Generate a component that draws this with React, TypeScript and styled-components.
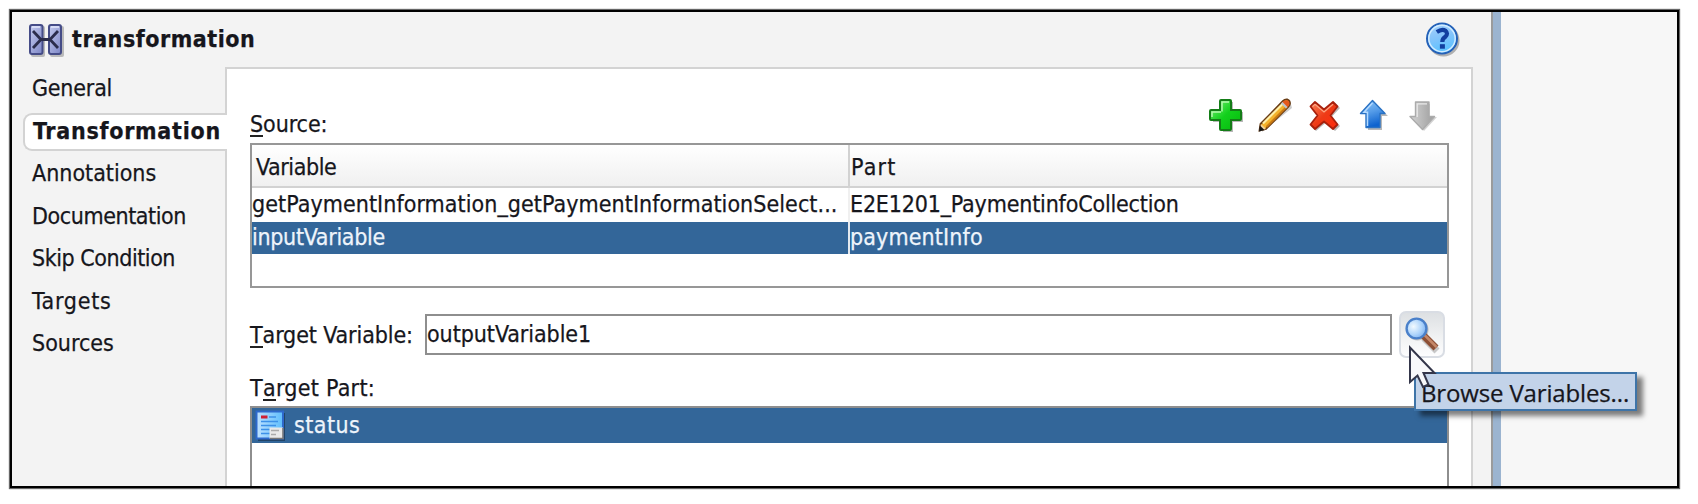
import React from 'react';
import styled, { createGlobalStyle } from 'styled-components';

const GlobalStyle = createGlobalStyle`
  * { box-sizing: border-box; }
  body { margin: 0; background: #fff; }
`;

const Page = styled.main`
  width: 1698px;
  height: 504px;
  padding: 10px 0 0 10px;
  overflow: hidden;
  color: #16161c;
  font-family: 'DejaVu Sans Condensed', 'DejaVu Sans', sans-serif;
  font-stretch: condensed;
  font-size: 23px;
  -webkit-text-stroke: 0.25px currentColor;
`;

const Frame = styled.div`
  display: flex;
  width: 1669px;
  height: 478px;
  border: 2px solid #000;
  box-shadow: 0 0 1px 0.7px rgba(0, 0, 0, 0.6);
`;

const Dialog = styled.section`
  display: flex;
  flex-direction: column;
  width: 1481px;
  height: 474px;
  background: #f3f3f3;
  border-right: 2px solid #9a9b9c;
`;

const Splitter = styled.div`
  width: 8px;
  background: #9bb4d0;
`;

const Canvas = styled.div`
  flex: 1;
  background: #f7f7f7;
`;

const Header = styled.header`
  display: flex;
  align-items: flex-start;
  height: 55px;
  padding: 10px 30px 0 16px;
`;

const Title = styled.h1`
  flex: 1;
  margin: 1px 0 0 8px;
  font-size: 23px;
  line-height: 32px;
  letter-spacing: 0.52px;
`;

const Body = styled.div`
  display: flex;
  height: 419px;
`;

const Tabs = styled.nav`
  position: relative;
  z-index: 1;
  width: 215px;
  margin-right: -2px;
  padding: 3px 0 0 11px;
`;

const Tab = styled.div<{ $active?: boolean; $spacing: number }>`
  height: 38px;
  margin-bottom: 4.5px;
  padding-left: ${(p) => (p.$active ? 8 : 7)}px;
  border: 2px solid ${(p) => (p.$active ? '#d3d3d3' : 'transparent')};
  border-right: 0;
  border-radius: 9px 0 0 9px;
  background: ${(p) => (p.$active ? '#fff' : 'transparent')};
  font-weight: ${(p) => (p.$active ? 700 : 400)};
  line-height: 33px;
  letter-spacing: ${(p) => p.$spacing}px;
  white-space: nowrap;
`;

const Content = styled.div`
  width: 1248px;
  height: 419px;
  padding: 30px 22px 0 23px;
  border: 2px solid #d3d3d3;
  border-bottom: 0;
  background: #fff;
`;

const SourceBar = styled.div`
  display: flex;
  align-items: flex-start;
  justify-content: space-between;
  height: 44px;
`;

const Label = styled.label<{ $spacing?: number }>`
  line-height: 30px;
  letter-spacing: ${(p) => p.$spacing ?? 0}px;
  white-space: nowrap;
`;

const Mnemonic = styled.span`
  box-shadow: inset 0 -2px 0 #222;
  display: inline-block;
  height: 28px;
  vertical-align: top;
`;

const SourceLabel = styled(Label)`
  padding-top: 10px;
`;

const Toolbar = styled.div`
  display: flex;
  gap: 13px;
  margin: -1px 8px 0 0;
`;

const Table = styled.div`
  width: 1199px;
  height: 145px;
  border: 2px solid #979797;
  background: #fff;
`;

const TableRow = styled.div<{ $selected?: boolean }>`
  display: grid;
  grid-template-columns: 598px 1fr;
  height: ${(p) => (p.$selected ? 32 : 34)}px;
  background: ${(p) => (p.$selected ? '#336699' : '#fff')};
  color: ${(p) => (p.$selected ? '#eef4fb' : '#16161c')};
  line-height: ${(p) => (p.$selected ? 30 : 32)}px;
`;

const TableHead = styled(TableRow)`
  height: 43px;
  border-bottom: 2px solid #d2d2d2;
  background: linear-gradient(#fff, #f0f0f0);
  line-height: 45px;
`;

const Cell = styled.div<{ $spacing: number; $divider?: string; $inset?: number }>`
  padding-left: ${(p) => p.$inset ?? 0}px;
  border-right: ${(p) => (p.$divider ? `2px solid ${p.$divider}` : '0')};
  letter-spacing: ${(p) => p.$spacing}px;
  white-space: nowrap;
  overflow: hidden;
`;

const TargetRow = styled.div`
  display: flex;
  align-items: center;
  height: 48px;
  margin-top: 22px;
`;

const TargetLabel = styled(Label)`
  width: 175px;
  padding-top: 1px;
`;

const Field = styled.input`
  width: 967px;
  height: 41px;
  padding: 0;
  border: 2px solid #8e8e8e;
  outline: 0;
  background: #fff;
  color: inherit;
  font: inherit;
  letter-spacing: -0.06px;
`;

const BrowseButton = styled.button`
  position: relative;
  width: 46px;
  height: 47px;
  margin-left: 7px;
  padding: 0;
  border: 2px solid #d9dde4;
  border-radius: 7px;
  background: linear-gradient(#dde0e3, #f2f3f4 60%, #fdfdfe);
  color: inherit;
`;

const GlassIcon = styled.svg`
  position: absolute;
  left: 3px;
  top: 3px;
`;

const Tooltip = styled.span`
  position: absolute;
  z-index: 2;
  left: 13px;
  top: 59px;
  width: 223px;
  height: 39px;
  padding-left: 5px;
  border: 2px solid #3e74a8;
  background: #c3d3e9;
  box-shadow: 6px 5px 5px rgba(0, 0, 0, 0.5);
  font: 24px/37px 'Open Sans', 'Noto Sans', sans-serif;
  letter-spacing: -0.15px;
  text-align: left;
  white-space: nowrap;
`;

const Pointer = styled.svg`
  position: absolute;
  z-index: 3;
  left: 7px;
  top: 32px;
`;

const PartLabel = styled(Label)`
  display: block;
  height: 33px;
  margin-top: 15px;
`;

const PartList = styled.div`
  width: 1199px;
  height: 80px;
  border: 2px solid #8e8e8e;
  border-bottom: 0;
`;

const PartItem = styled.div`
  display: flex;
  align-items: center;
  height: 35px;
  padding-left: 3px;
  background: #336699;
  color: #eef4fb;
  line-height: 33px;
  letter-spacing: 0.44px;
`;

const PartName = styled.span`
  margin: 0 0 0 9px;
`;

const TransformIcon = () => (
  <svg width="36" height="36" viewBox="0 0 36 36">
    <defs>
      <linearGradient id="tf" x1="0" x2="1" y1="0" y2="1">
        <stop offset="0" stopColor="#c3caee" />
        <stop offset="1" stopColor="#7d86c6" />
      </linearGradient>
    </defs>
    <g fill="#777" opacity="0.45">
      <rect x="3" y="4" width="14" height="31" rx="2" />
      <rect x="22" y="4" width="14" height="31" rx="2" />
    </g>
    <g fill="url(#tf)" stroke="#454c87" strokeWidth="2">
      <rect x="2" y="3" width="12.5" height="29" rx="2" />
      <rect x="21" y="3" width="12" height="29" rx="2" />
    </g>
    <path d="M4 5h8M23 5h8" stroke="#e3e7fb" strokeWidth="1.5" />
    <path d="M5 9L13 17.500L5 26M30 9L22 17.500L30 26M12 17.500H23" fill="none" stroke="#2b2d4c" strokeWidth="2.800" />
  </svg>
);

const HelpIcon = () => (
  <svg width="36" height="36" viewBox="0 0 36 36">
    <defs>
      <linearGradient id="hp" x1="0" x2="0.3" y1="0" y2="1">
        <stop offset="0" stopColor="#a9d3fb" />
        <stop offset="0.5" stopColor="#86c4fb" />
        <stop offset="1" stopColor="#5cc2ff" />
      </linearGradient>
    </defs>
    <circle cx="18.500" cy="18.500" r="16" fill="#333" opacity="0.35" />
    <circle cx="17" cy="16.500" r="15" fill="url(#hp)" stroke="#2461b8" strokeWidth="2" />
    <circle cx="17" cy="16.500" r="13.200" fill="none" stroke="#d2ecff" strokeWidth="1.500" />
    <path d="M11.800 10Q17 6.500 20.500 8.700Q23.500 11.500 20.500 14.600Q17.300 16.500 17.300 20" fill="none" stroke="#123fa0" strokeWidth="4.200" />
    <rect x="14.900" y="22.200" width="5" height="4.500" fill="#123fa0" />
  </svg>
);

const AddIcon = () => (
  <svg width="36" height="36" viewBox="0 0 36 36">
    <defs>
      <linearGradient id="ad" x1="0" x2="1" y1="0" y2="1">
        <stop offset="0" stopColor="#7cf27a" />
        <stop offset="0.5" stopColor="#12d01c" />
        <stop offset="1" stopColor="#05b90c" />
      </linearGradient>
    </defs>
    <path d="M14 4h10v10h10v10H24v10H14V24H4V14h10z" fill="#333" opacity="0.35" />
    <path d="M12 2h9q1 0 1 1v9H31q1 0 1 1v8q0 1-1 1h-9V31q0 1-1 1h-9q-1 0-1-1v-9H2q-1 0-1-1v-8q0-1 1-1h9V3q0-1 1-1z" fill="url(#ad)" stroke="#147d17" strokeWidth="2" />
    <path d="M13 13.500V4h7M3 19v-5h9" fill="none" stroke="#b5f8ae" strokeWidth="1.500" />
  </svg>
);

const EditIcon = () => (
  <svg width="36" height="36" viewBox="0 0 36 36">
    <path d="M4 34L34 10L32 3L5 30z" fill="#333" opacity="0.25" />
    <path d="M2.500 26L25 3q2-2 4.500-1.500Q32 2.500 32 5.500Q32 7 30.500 8.500L8 31L1.500 32.500z" fill="#f4b32c" stroke="#6a3c14" strokeWidth="1.800" />
    <path d="M5 25.500L25.500 5" stroke="#fff0a8" strokeWidth="2.200" />
    <path d="M8.500 29L29 8.500" stroke="#c87912" strokeWidth="2" />
    <path d="M24 4.500L29 9.500L31 7.500Q32.500 4.500 30 2.500Q27 1.500 25 3.500z" fill="#e5581b" />
    <path d="M23 5.500L28 10.500L29.500 9L24.500 4z" fill="#bfc4cc" />
    <path d="M3 26L8 31L1.500 33z" fill="#f3d39a" />
    <path d="M1.800 27.500L6.500 32L1 33.500z" fill="#141414" />
  </svg>
);

const DeleteIcon = () => (
  <svg width="36" height="36" viewBox="0 0 36 36">
    <defs>
      <linearGradient id="dl" x1="0" x2="1" y1="0" y2="1">
        <stop offset="0" stopColor="#f98258" />
        <stop offset="0.5" stopColor="#ee3a16" />
        <stop offset="1" stopColor="#ff2a0c" />
      </linearGradient>
    </defs>
    <path d="M9 5l9.500 8L28 5l5 5l-8.500 9L33 28l-5 5l-9.500-8L9 33l-5-5l8.500-9L4 10z" fill="#333" opacity="0.35" />
    <path d="M8 4L17 11.500L26 4L30.500 8.500L23.500 17.500L30.500 26.500L26 31L17 23.500L8 31L3.500 26.500L10.500 17.500L3.500 8.500z" fill="url(#dl)" stroke="#a8210d" strokeWidth="1.800" strokeLinejoin="round" />
    <path d="M5.500 8.500L8 6.200L17 14L26 6.200" fill="none" stroke="#fda583" strokeWidth="1.200" />
  </svg>
);

const UpIcon = () => (
  <svg width="36" height="36" viewBox="0 0 36 36">
    <defs>
      <linearGradient id="up" x1="0" x2="0.300" y1="0" y2="1">
        <stop offset="0" stopColor="#8ec6f8" />
        <stop offset="0.5" stopColor="#559ce8" />
        <stop offset="1" stopColor="#0e63cf" />
      </linearGradient>
    </defs>
    <path d="M18 4L32 18H26V32H12V18z" fill="#333" opacity="0.35" />
    <path d="M16.500 2.500L29 15.500H24V29.500H10V15.500H4.500z" fill="url(#up)" stroke="#2a72c4" strokeWidth="1.400" strokeLinejoin="round" />
    <path d="M11.500 28V14.300H8L16.500 5" fill="none" stroke="#b4daff" strokeWidth="1.500" />
  </svg>
);

const DownIcon = () => (
  <svg width="36" height="36" viewBox="0 0 36 36">
    <defs>
      <linearGradient id="dn" x1="0" x2="1">
        <stop offset="0" stopColor="#d3d3d3" />
        <stop offset="1" stopColor="#9d9d9d" />
      </linearGradient>
    </defs>
    <path d="M13 6H25V19H32L19 33L8 19H13z" fill="#333" opacity="0.22" />
    <path d="M10.500 4H24V18.500H29.500L17.500 31.500L5 18.500H10.500z" fill="url(#dn)" stroke="#ababab" strokeWidth="1.400" strokeLinejoin="round" />
    <path d="M12.200 19V5.800H22" fill="none" stroke="#e9e9e9" strokeWidth="1.300" />
  </svg>
);

const Magnifier = () => (
  <GlassIcon width="38" height="38" viewBox="0 0 38 38">
    <defs>
      <radialGradient id="gl" cx="0.350" cy="0.400" r="0.700">
        <stop offset="0" stopColor="#f2faff" />
        <stop offset="0.6" stopColor="#aed4fb" />
        <stop offset="1" stopColor="#79aef0" />
      </radialGradient>
    </defs>
    <path d="M20 22L33 35" stroke="#555" strokeWidth="7" opacity="0.3" />
    <circle cx="13.500" cy="13.500" r="11" fill="#555" opacity="0.3" />
    <path d="M19.500 19.500L32 32" stroke="#8d4f35" strokeWidth="7" />
    <path d="M20.500 19L32.500 31" stroke="#c58768" strokeWidth="2.500" />
    <circle cx="12.500" cy="12.500" r="9.900" fill="url(#gl)" stroke="#4a80ca" strokeWidth="2.400" />
  </GlassIcon>
);

const VariableIcon = () => (
  <svg width="30" height="31" viewBox="0 0 30 31">
    <defs>
      <linearGradient id="vr" x1="0" x2="1">
        <stop offset="0" stopColor="#bfe2ff" />
        <stop offset="1" stopColor="#5dbdfc" />
      </linearGradient>
    </defs>
    <rect x="3" y="3" width="27" height="28" fill="#123" opacity="0.5" />
    <rect x="1.500" y="1.500" width="26.500" height="27" fill="url(#vr)" stroke="#2d69cc" strokeWidth="2" />
    <path d="M6 11.500h17M6 15.500h15M6 19.500h17M6 23.500h15M14 7h7" stroke="#3d91e8" strokeWidth="1.600" />
    <path d="M6 7h6.500" stroke="#cf1f35" strokeWidth="3" />
    <path d="M14.500 17.500H28V28.500H14.500z" fill="#e9e9e9" />
    <path d="M16 20.500h8M16 24.500h5" stroke="#aaa" strokeWidth="1.400" />
    <path d="M28 18V28.500H15" fill="none" stroke="#777" strokeWidth="1.600" />
  </svg>
);

const tabs = [
  { name: 'General', spacing: -0.2 },
  { name: 'Transformation', spacing: 0.73, active: true },
  { name: 'Annotations', spacing: 0 },
  { name: 'Documentation', spacing: -0.42 },
  { name: 'Skip Condition', spacing: -0.45 },
  { name: 'Targets', spacing: 0.74 },
  { name: 'Sources', spacing: 0 },
];

export default function App() {
  return (
    <Page>
      <GlobalStyle />
      <Frame>
        <Dialog>
          <Header>
            <TransformIcon />
            <Title>transformation</Title>
            <HelpIcon />
          </Header>
          <Body>
            <Tabs>
              {tabs.map((t) => (
                <Tab key={t.name} $active={t.active} $spacing={t.spacing}>
                  {t.name}
                </Tab>
              ))}
            </Tabs>
            <Content>
              <SourceBar>
                <SourceLabel $spacing={-0.08}>
                  <Mnemonic>S</Mnemonic>ource:
                </SourceLabel>
                <Toolbar>
                  <AddIcon />
                  <EditIcon />
                  <DeleteIcon />
                  <UpIcon />
                  <DownIcon />
                </Toolbar>
              </SourceBar>
              <Table>
                <TableHead>
                  <Cell $spacing={-0.41} $divider="#d2d2d2" $inset={4}>Variable</Cell>
                  <Cell $spacing={1.2} $inset={1}>Part</Cell>
                </TableHead>
                <TableRow>
                  <Cell $spacing={0.06} $divider="#f0f0f0">
                    getPaymentInformation_getPaymentInformationSelect...
                  </Cell>
                  <Cell $spacing={-0.18}>E2E1201_PaymentinfoCollection</Cell>
                </TableRow>
                <TableRow $selected>
                  <Cell $spacing={-0.3} $divider="#e4e9ef">inputVariable</Cell>
                  <Cell $spacing={0.13}>paymentInfo</Cell>
                </TableRow>
              </Table>
              <TargetRow>
                <TargetLabel $spacing={-0.1}>
                  <Mnemonic>T</Mnemonic>arget Variable:
                </TargetLabel>
                <Field defaultValue="outputVariable1" />
                <BrowseButton>
                  <Magnifier />
                  <Tooltip>Browse Variables...</Tooltip>
                  <Pointer width="32" height="46" viewBox="0 0 32 46">
                    <path
                      d="M2 2.500V37L9.500 30.500L15 42L20.500 39.500L15.500 28H26.500z"
                      fill="#f8f8fa"
                      stroke="#34364a"
                      strokeWidth="2"
                    />
                  </Pointer>
                </BrowseButton>
              </TargetRow>
              <PartLabel $spacing={0.28}>
                T<Mnemonic>a</Mnemonic>rget Part:
              </PartLabel>
              <PartList>
                <PartItem>
                  <VariableIcon />
                  <PartName>status</PartName>
                </PartItem>
              </PartList>
            </Content>
          </Body>
        </Dialog>
        <Splitter />
        <Canvas />
      </Frame>
    </Page>
  );
}
